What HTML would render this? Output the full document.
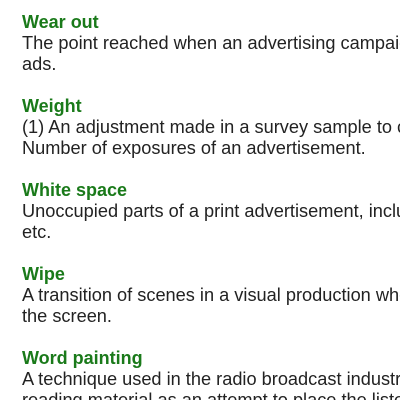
<!DOCTYPE html>
<html><head><style>
html,body{margin:0;padding:0;background:#fff;width:400px;height:400px;overflow:hidden}
.w{position:absolute;left:0;top:0;width:400px;height:400px;overflow:hidden}
.c{font-family:"Liberation Sans",Arial,sans-serif;font-size:18.2px;line-height:21px;color:#222;padding:12px 0 0 22px;white-space:nowrap}
.t{color:#1a7a1a;font-weight:bold;font-size:18px}
p{margin:0 0 21px 0}
</style></head><body><div class="w"><div class="c">
<p><span class="t">Wear out</span><br>The point reached when an advertising campaign loses effectiveness<br>ads.</p>
<p><span class="t">Weight</span><br>(1) An adjustment made in a survey sample to correct<br>Number of exposures of an advertisement.</p>
<p><span class="t">White space</span><br>Unoccupied parts of a print advertisement, including<br>etc.</p>
<p><span class="t">Wipe</span><br>A transition of scenes in a visual production where<br>the screen.</p>
<p><span class="t">Word painting</span><br>A technique used in the radio broadcast industry involving<br>reading material as an attempt to place the listener</p>
</div></div></body></html>
